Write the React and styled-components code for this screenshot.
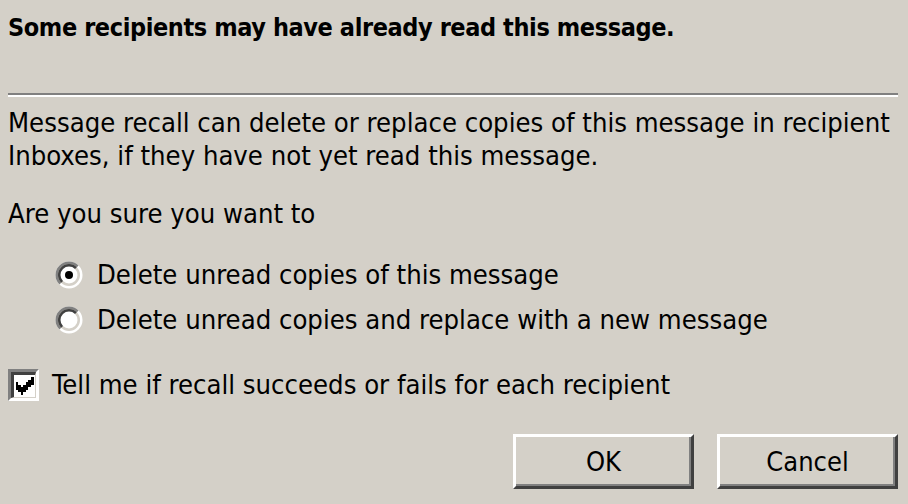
import React from 'react';
import styled, { createGlobalStyle } from 'styled-components';

const face = '#d4d0c8';
const shadow = '#808080';
const darkShadow = '#404040';
const highlight = '#ffffff';

const GlobalStyle = createGlobalStyle`
  html, body {
    margin: 0;
    background: ${face};
  }
  body {
    font-family: "DejaVu Sans Condensed", "DejaVu Sans", sans-serif;
    color: #000;
  }
`;

const Dialog = styled.div`
  width: 908px;
  height: 504px;
  box-sizing: border-box;
  padding: 13px 10px 0 8px;
  display: flex;
  flex-direction: column;
`;

const Title = styled.div`
  font-size: 25px;
  font-weight: bold;
  letter-spacing: -0.4px;
  line-height: 30px;
`;

const Separator = styled.div`
  margin-top: 50px;
  height: 2px;
  background: ${shadow};
  border-bottom: 2px solid ${highlight};
`;

const Text = styled.p`
  margin: ${props => props.$top || 0}px 0 0;
  font-size: 27.2px;
  line-height: 33px;
`;

const Options = styled.div`
  margin-top: 31px;
  padding-left: 47px;
  display: flex;
  flex-direction: column;
  gap: 17px;
`;

const OptionRow = styled.label`
  display: flex;
  align-items: center;
  gap: 14px;
  font-size: 27.2px;
  line-height: 28px;
`;

const CheckRow = styled(OptionRow)`
  margin-top: 35px;
  gap: 13px;
`;

const CheckBox = styled.span`
  width: 31px;
  height: 32px;
  box-sizing: border-box;
  border-top: 3px solid ${shadow};
  border-left: 3px solid ${shadow};
  border-right: 3px solid ${highlight};
  border-bottom: 3px solid ${highlight};
  display: flex;
  flex-shrink: 0;
`;

const CheckInner = styled.span`
  flex: 1;
  border-top: 3px solid ${darkShadow};
  border-left: 3px solid ${darkShadow};
  border-right: 1px solid ${face};
  border-bottom: 1px solid ${face};
  background: #fff;
  display: flex;
  align-items: center;
  justify-content: center;
`;

const Buttons = styled.div`
  margin-top: auto;
  margin-bottom: 15px;
  display: flex;
  justify-content: flex-end;
  gap: 23px;
`;

const Button = styled.button`
  width: 181px;
  height: 55px;
  box-sizing: border-box;
  background: ${face};
  font-family: inherit;
  font-size: 27px;
  color: #000;
  padding: 0;
  border-top: 3px solid ${highlight};
  border-left: 3px solid ${highlight};
  border-right: 3px solid ${darkShadow};
  border-bottom: 3px solid ${darkShadow};
  box-shadow: inset -2px -2px 0 ${shadow};
`;

// half disc on the upper-left side of a circle centred at 14,14
const upperLeft = r => {
  const d = r * Math.SQRT1_2;
  return `M${14 - d} ${14 + d} A${r} ${r} 0 0 1 ${14 + d} ${14 - d} Z`;
};

const Radio = ({ checked }) => (
  <svg width="28" height="28" viewBox="0 0 28 28">
    <circle cx="14" cy="14" r="13.5" fill={highlight} />
    <path d={upperLeft(13.5)} fill={shadow} />
    <circle cx="14" cy="14" r="11" fill={face} />
    <path d={upperLeft(11)} fill={darkShadow} />
    <circle cx="14" cy="14" r="8.5" fill="#fff" />
    {checked && <circle cx="14" cy="14" r="4" fill="#000" />}
  </svg>
);

// classic 7x7 check mark, one column at a time
const checkTops = [2, 3, 4, 3, 2, 1, 0];

const Check = () => (
  <svg width="19" height="18" viewBox="0 0 7 7" shapeRendering="crispEdges">
    {checkTops.map((top, x) => (
      <rect key={x} x={x} y={top} width="1" height="3" fill="#000" />
    ))}
  </svg>
);

const App = () => (
  <>
    <GlobalStyle />
    <Dialog>
      <Title>Some recipients may have already read this message.</Title>
      <Separator />
      <Text $top={9}>
        Message recall can delete or replace copies of this message in recipient
        <br />
        Inboxes, if they have not yet read this message.
      </Text>
      <Text $top={25}>Are you sure you want to</Text>
      <Options>
        <OptionRow>
          <Radio checked />
          Delete unread copies of this message
        </OptionRow>
        <OptionRow>
          <Radio />
          Delete unread copies and replace with a new message
        </OptionRow>
      </Options>
      <CheckRow>
        <CheckBox>
          <CheckInner>
            <Check />
          </CheckInner>
        </CheckBox>
        Tell me if recall succeeds or fails for each recipient
      </CheckRow>
      <Buttons>
        <Button>OK</Button>
        <Button>Cancel</Button>
      </Buttons>
    </Dialog>
  </>
);

export default App;
